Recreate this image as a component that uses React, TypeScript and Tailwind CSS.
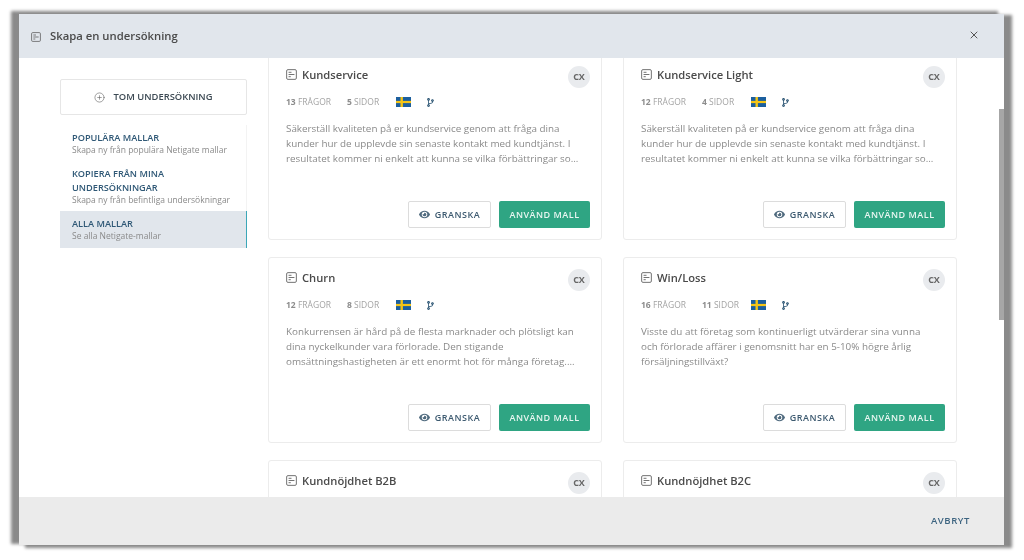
import { CirclePlus, X } from "lucide-react";
import { FaCodeBranch, FaEye } from "react-icons/fa";

const font = { fontFamily: '"Open Sans", sans-serif' };

function DocIcon({ className }: { className: string }) {
  return (
    <svg viewBox="0 0 12 12" className={className} fill="none" stroke="currentColor" strokeWidth="1">
      <rect x="0.7" y="0.7" width="10.6" height="10.6" rx="1.4" />
      <path d="M2.8 3.6h3.2M2.8 6h6.4M2.8 8.4h2.4" />
    </svg>
  );
}

function Flag() {
  return (
    <svg viewBox="0 0 15 10" className="h-[10px] w-[15px]">
      <rect width="15" height="10" fill="#1c5f9e" />
      <rect x="4.5" width="2.4" height="10" fill="#f5c516" />
      <rect y="3.9" width="15" height="2.2" fill="#f5c516" />
    </svg>
  );
}

type Item = { title: string; q?: number; s?: number; desc?: string[] };

const items: Item[] = [
  {
    title: "Kundservice",
    q: 13,
    s: 5,
    desc: [
      "Säkerställ kvaliteten på er kundservice genom att fråga dina",
      "kunder hur de upplevde sin senaste kontakt med kundtjänst. I",
      "resultatet kommer ni enkelt att kunna se vilka förbättringar so...",
    ],
  },
  {
    title: "Kundservice Light",
    q: 12,
    s: 4,
    desc: [
      "Säkerställ kvaliteten på er kundservice genom att fråga dina",
      "kunder hur de upplevde sin senaste kontakt med kundtjänst. I",
      "resultatet kommer ni enkelt att kunna se vilka förbättringar so...",
    ],
  },
  {
    title: "Churn",
    q: 12,
    s: 8,
    desc: [
      "Konkurrensen är hård på de flesta marknader och plötsligt kan",
      "dina nyckelkunder vara förlorade. Den stigande",
      "omsättningshastigheten är ett enormt hot för många företag....",
    ],
  },
  {
    title: "Win/Loss",
    q: 16,
    s: 11,
    desc: [
      "Visste du att företag som kontinuerligt utvärderar sina vunna",
      "och förlorade affärer i genomsnitt har en 5-10% högre årlig",
      "försäljningstillväxt?",
    ],
  },
  { title: "Kundnöjdhet B2B" },
  { title: "Kundnöjdhet B2C" },
];

function Card({ item }: { item: Item }) {
  return (
    <div className="flex h-[186px] flex-col rounded-[3px] border border-[#ececec] bg-white pl-[17px] pr-[11px]">
      <div className="flex h-[42px] shrink-0 items-start justify-between pt-[11px]">
        <div className="flex h-[15px] items-center gap-[5px] pt-[2px] text-[#4a4a4a]">
          <DocIcon className="h-[11px] w-[11px] text-[#666]" />
          <span className="text-[11.2px] font-semibold leading-[14px]">{item.title}</span>
        </div>
        <div className="flex h-[22px] w-[22px] items-center justify-center rounded-full bg-[#e9ebee] text-[9px] font-bold text-[#666]">
          CX
        </div>
      </div>
      {item.desc && (
        <>
          <div className="flex h-[10px] items-center text-[8.5px] leading-[10px] text-[#a3a3a3]">
            <span className="w-[61px]">
              <b className="font-bold text-[#8c8c8c]">{item.q}</b> FRÅGOR
            </span>
            <span className="w-[49px]">
              <b className="font-bold text-[#8c8c8c]">{item.s}</b> SIDOR
            </span>
            <Flag />
            <FaCodeBranch className="ml-[16px] h-[9px] w-[7px] text-[#2f5876]" />
          </div>
          <div className="mt-[14px] h-[60px] text-[9.85px] leading-[15px] text-[#8a8a8a]">
            {item.desc.map((l) => (
              <div key={l} className="whitespace-nowrap">
                {l}
              </div>
            ))}
          </div>
          <div className="flex justify-end gap-[8px] pt-[20px]">
            <button className="flex h-[27px] w-[83px] items-center justify-center gap-[5px] rounded-[2px] border border-[#dcdcdc] bg-white text-[9px] font-semibold tracking-[0.5px] text-[#3d5a70]">
              <FaEye className="h-[11px] w-[11px] text-[#4f6a7e]" />
              GRANSKA
            </button>
            <button className="h-[27px] w-[91px] rounded-[2px] bg-[#2fa583] text-[9px] font-semibold tracking-[0.5px] text-[#e8f6f1]">
              ANVÄND MALL
            </button>
          </div>
        </>
      )}
    </div>
  );
}

function NavItem({ title, sub, active }: { title: string[]; sub: string; active?: boolean }) {
  return (
    <div
      className={
        active
          ? "border-r-[1.5px] border-[#3ba7b8] bg-[#e1e6ec] pb-[7px] pl-[12px] pt-[6px]"
          : "border-r border-[#f3f3f3] pb-[6px] pl-[12px] pt-[6px]"
      }
    >
      {title.map((t) => (
        <div key={t} className="text-[9.2px] font-semibold leading-[14px] text-[#2f5876]">
          {t}
        </div>
      ))}
      <div className="whitespace-nowrap text-[8.5px] leading-[10px] text-[#8a8a8a]">{sub}</div>
    </div>
  );
}

export default function App() {
  return (
    <div className="h-[560px] w-[1024px] overflow-hidden bg-white pl-[19px] pt-[14px] blur-[0.35px]" style={font}>
      <div className="flex h-[531px] w-[985px] flex-col bg-white shadow-[-7px_-2px_3px_1px_#8a8a8a,7px_2px_3px_1px_#8a8a8a]">
        <div className="flex h-[44px] shrink-0 items-center justify-between bg-[#e1e6ec] pl-[12px] pr-[24px]">
          <div className="mt-[1px] flex items-center gap-[9px] text-[#4a4a4a]">
            <DocIcon className="h-[10px] w-[10px] text-[#666]" />
            <span className="text-[11.3px] font-semibold">Skapa en undersökning</span>
          </div>
          <X className="-mt-[2px] h-[12px] w-[12px] text-[#555]" strokeWidth={2} />
        </div>
        <div className="relative flex min-h-0 flex-1 overflow-hidden">
          <div className="w-[249px] shrink-0 pl-[41px] pt-[21px]">
            <div className="w-[187px]">
              <div className="flex h-[36px] items-center justify-center gap-[8px] rounded-[2px] border border-[#e6e6e6] text-[9.4px] font-semibold text-[#3d4a54]">
                <CirclePlus className="h-[11px] w-[11px] text-[#555]" strokeWidth={1.2} />
                TOM UNDERSÖKNING
              </div>
              <div className="mt-[10px]">
                <NavItem title={["POPULÄRA MALLAR"]} sub="Skapa ny från populära Netigate mallar" />
                <NavItem
                  title={["KOPIERA FRÅN MINA", "UNDERSÖKNINGAR"]}
                  sub="Skapa ny från befintliga undersökningar"
                />
                <NavItem active title={["ALLA MALLAR"]} sub="Se alla Netigate-mallar" />
              </div>
            </div>
          </div>
          <div className="-mt-[4px] grid h-[600px] w-[689px] shrink-0 grid-cols-[334px_334px] content-start gap-x-[21px] gap-y-[17px]">
            {items.map((i) => (
              <Card key={i.title} item={i} />
            ))}
          </div>
          <div className="absolute right-0 top-[51px] h-[211px] w-[5px] bg-[#a6a6a6]" />
        </div>
        <div className="relative flex h-[48px] shrink-0 items-center justify-end bg-[#ebebeb] pr-[34px]">
          <span className="text-[9.5px] font-semibold tracking-[0.6px] text-[#3d6480]">AVBRYT</span>
        </div>
      </div>
    </div>
  );
}
